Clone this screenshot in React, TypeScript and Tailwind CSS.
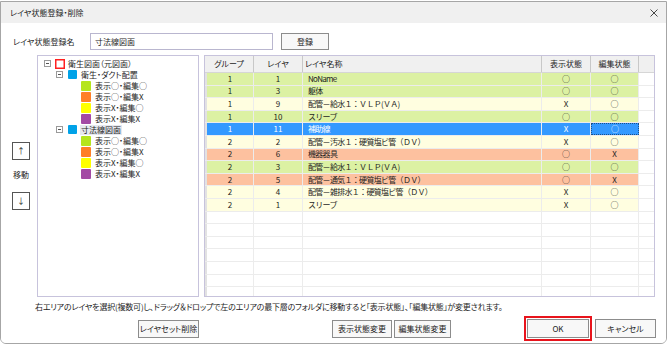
import React from 'react';

type Tone = 'green' | 'yellow' | 'orange' | 'selected';

interface LayerRow {
  group: number;
  layer: number;
  name: string;
  disp: string;
  edit: string;
  tone: Tone;
}

const rows: LayerRow[] = [
  { group: 1, layer: 1, name: 'NoName', disp: '○', edit: '○', tone: 'green' },
  { group: 1, layer: 3, name: '躯体', disp: '○', edit: '○', tone: 'green' },
  { group: 1, layer: 9, name: '配管－給水１：ＶＬＰ(ＶＡ)', disp: 'X', edit: '○', tone: 'yellow' },
  { group: 1, layer: 10, name: 'スリーブ', disp: '○', edit: '○', tone: 'green' },
  { group: 1, layer: 11, name: '補助線', disp: 'X', edit: '○', tone: 'selected' },
  { group: 2, layer: 2, name: '配管－汚水１：硬質塩ビ管（ＤＶ）', disp: 'X', edit: '○', tone: 'yellow' },
  { group: 2, layer: 6, name: '機器器具', disp: '○', edit: 'X', tone: 'orange' },
  { group: 2, layer: 3, name: '配管－給水１：ＶＬＰ(ＶＡ)', disp: '○', edit: '○', tone: 'green' },
  { group: 2, layer: 5, name: '配管－通気１：硬質塩ビ管（ＤＶ）', disp: '○', edit: 'X', tone: 'orange' },
  { group: 2, layer: 4, name: '配管－雑排水１：硬質塩ビ管（ＤＶ）', disp: 'X', edit: '○', tone: 'yellow' },
  { group: 2, layer: 1, name: 'スリーブ', disp: 'X', edit: '○', tone: 'yellow' },
];

const toneClass: Record<Tone, string> = {
  green: 'bg-[#dcf1a3]',
  yellow: 'bg-[#fffee0]',
  orange: 'bg-[#fdc19f]',
  selected: 'bg-[#3399ff] text-white',
};

const leafStates = [
  { color: 'bg-[#b5e51d]', label: '表示○・編集○' },
  { color: 'bg-[#ff7f27]', label: '表示○・編集X' },
  { color: 'bg-[#ffff00]', label: '表示X・編集○' },
  { color: 'bg-[#a349a4]', label: '表示X・編集X' },
];

const Minus = () => (
  <svg width="7" height="7" viewBox="0 0 7 7" className="shrink-0">
    <rect x="0.5" y="0.5" width="6" height="6" fill="white" stroke="#9a9a9a" />
    <line x1="2" y1="3.5" x2="5" y2="3.5" stroke="#555" />
  </svg>
);

const Btn: React.FC<{ label: string; className?: string }> = ({ label, className }) => (
  <div
    className={`flex items-center justify-center border border-[#8c8c8c] bg-[#f8f8f8] text-[#222] ${className ?? ''}`}
  >
    {label}
  </div>
);

const Cell: React.FC<{ w: string; children?: React.ReactNode; left?: boolean }> = ({ w, children, left }) => (
  <div
    className={`${w} shrink-0 h-full flex items-center border-r border-[#ececec] ${
      left ? 'justify-start pl-[5px] [font-feature-settings:normal] tracking-[-0.7px]' : 'justify-center'
    } whitespace-nowrap overflow-hidden`}
  >
    {children}
  </div>
);

export default function App() {
  return (
    <div className="w-[667px] h-[349px] bg-white pt-[1px] pb-[5px] font-['Noto_Sans_CJK_JP','Noto_Sans',sans-serif] text-[8px] [font-feature-settings:'palt'] text-[#1e1e1e] leading-none">
      <div className="w-[667px] h-full border border-[#a6a6a6] rounded-b-[6px] flex flex-col overflow-hidden">
        {/* Title bar */}
        <div className="h-[21px] bg-[#f0f0f0] flex items-center justify-between pl-[9px] pr-[8px] shrink-0">
          <span>レイヤ状態登録・削除</span>
          <svg width="8" height="8" viewBox="0 0 8 8">
            <path d="M0.5 0.5 L7.5 7.5 M7.5 0.5 L0.5 7.5" stroke="#333" strokeWidth="0.9" />
          </svg>
        </div>

        {/* Body */}
        <div className="flex-1 bg-white flex flex-col">
          {/* Name row */}
          <div className="flex items-center h-[17px] mt-[10px] pl-[12px]">
            <span className="w-[77px]">レイヤ状態登録名</span>
            <div className="w-[183px] h-[17px] border border-[#b9b6cf] flex items-center pl-[4px]">寸法線図面</div>
            <Btn label="登録" className="ml-[8px] w-[48px] h-[17px]" />
          </div>

          {/* Main area */}
          <div className="flex mt-[5px] h-[242px]">
            {/* Move buttons */}
            <div className="w-[18px] ml-[11px] flex flex-col items-center pt-[87px]">
              <div className="w-[18px] h-[18px] border border-[#555] flex items-center justify-center">↑</div>
              <div className="mt-[10px] h-[10px] flex items-center whitespace-nowrap">移動</div>
              <div className="mt-[12px] w-[18px] h-[18px] border border-[#555] flex items-center justify-center">↓</div>
            </div>

            {/* Tree */}
            <div className="ml-[7px] w-[162px] h-full border border-[#c7c3dc] pt-[2px] flex flex-col">
              <div className="h-[11px] flex items-center pl-[6px]">
                <Minus />
                <svg width="10" height="10" viewBox="0 0 10 10" className="ml-[4px] shrink-0">
                  <rect x="0.75" y="0.75" width="8.5" height="8.5" fill="white" stroke="#ff2020" strokeWidth="1.5" />
                </svg>
                <span className="ml-[3px]">衛生図面（元図面）</span>
              </div>
              {['衛生・ダクト配置', '寸法線図面'].map((folder) => (
                <React.Fragment key={folder}>
                  <div className="h-[11px] flex items-center pl-[18px]">
                    <Minus />
                    <div className="ml-[5px] w-[9px] h-[9px] rounded-[1px] bg-[#00a2e8]" />
                    <span
                      className={`ml-[3px] px-[1px] h-[10px] flex items-center ${
                        folder === '寸法線図面' ? 'bg-[#e6e8ee]' : ''
                      }`}
                    >
                      {folder}
                    </span>
                  </div>
                  {leafStates.map((leaf) => (
                    <div key={folder + leaf.label} className="h-[11px] flex items-center pl-[43px]">
                      <div className={`w-[10px] h-[10px] rounded-[1px] ${leaf.color}`} />
                      <span className="ml-[4px]">{leaf.label}</span>
                    </div>
                  ))}
                </React.Fragment>
              ))}
            </div>

            {/* Layer table */}
            <div className="ml-[5px] w-[451px] h-full border border-[#c7c3dc] flex flex-col overflow-hidden">
              <div className="h-[17px] flex shrink-0 bg-[#f0f0f0] border-b border-[#d6d6d6]">
                <div className="w-[49px] h-full flex items-center justify-center border-r border-[#c8c8c8]">グループ</div>
                <div className="w-[49px] h-full flex items-center justify-center border-r border-[#c8c8c8]">レイヤ</div>
                <div className="w-[239px] h-full flex items-center pl-[2px] border-r border-[#c8c8c8]">レイヤ名称</div>
                <div className="w-[49px] h-full flex items-center justify-center border-r border-[#c8c8c8]">表示状態</div>
                <div className="w-[48px] h-full flex items-center justify-center border-r border-[#c8c8c8]">編集状態</div>
                <div className="flex-1 bg-[#f0f0f0]" />
              </div>
              {rows.map((r, i) => (
                <div key={i} className="h-[12.6px] flex shrink-0 border-b border-[#ececec]">
                  <div className="w-[2px] h-full bg-[#e2e2e2]" />
                  <div className={`flex h-full ${toneClass[r.tone]}`}>
                    <Cell w="w-[47px]">{r.group}</Cell>
                    <Cell w="w-[49px]">{r.layer}</Cell>
                    <Cell w="w-[239px]" left>
                      {r.name}
                    </Cell>
                    <Cell w="w-[49px]">{r.disp}</Cell>
                    <div
                      className={`w-[48px] h-full flex items-center justify-center ${
                        r.tone === 'selected' ? 'border border-[#1b4f8a] border-dotted' : 'border-r border-[#ececec]'
                      }`}
                    >
                      {r.edit}
                    </div>
                  </div>
                  <div className="flex-1 bg-white" />
                </div>
              ))}
              {Array.from({ length: 7 }).map((_, i) => (
                <div key={'e' + i} className="h-[12.6px] flex shrink-0 border-b border-[#ececec]">
                  <div className="w-[2px] h-full bg-[#e2e2e2]" />
                  <Cell w="w-[47px]" />
                  <Cell w="w-[49px]" />
                  <Cell w="w-[239px]" />
                  <Cell w="w-[49px]" />
                  <Cell w="w-[48px]" />
                  <div className="flex-1" />
                </div>
              ))}
            </div>
          </div>

          {/* Help text */}
          <div className="mt-[5px] h-[10px] flex items-center pl-[34px] whitespace-nowrap tracking-[-0.2px]">
            右エリアのレイヤを選択(複数可)し、ドラッグ＆ドロップで左のエリアの最下層のフォルダに移動すると「表示状態」、「編集状態」が変更されます。
          </div>

          {/* Buttons */}
          <div className="mt-[4px] h-[25px] flex items-center">
            <Btn label="レイヤセット削除" className="ml-[137px] w-[61px] h-[18px]" />
            <Btn label="表示状態変更" className="ml-[133px] w-[60px] h-[18px]" />
            <Btn label="編集状態変更" className="ml-[2px] w-[57px] h-[18px]" />
            <div className="ml-[73px] w-[68px] h-[25px] border-2 border-[#e8141c] p-[1px]">
              <Btn label="OK" className="w-full h-full" />
            </div>
            <Btn label="キャンセル" className="ml-[3px] w-[61px] h-[19px]" />
          </div>
        </div>
      </div>
    </div>
  );
}
